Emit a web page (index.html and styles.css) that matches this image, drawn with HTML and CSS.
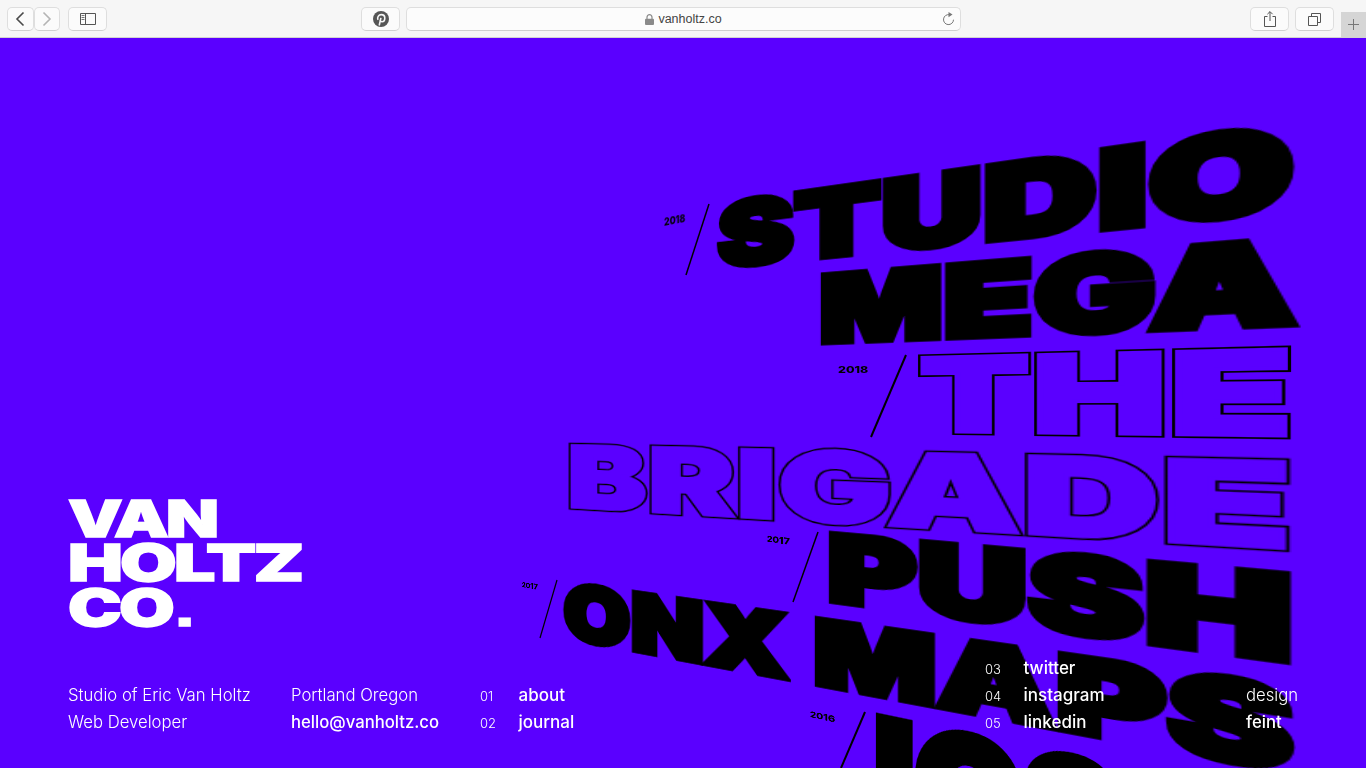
FILE: index.html
```html
<!DOCTYPE html>
<html lang="en">
<head>
  <meta charset="UTF-8" />
  <title>Van Holtz Co.</title>
  <link rel="stylesheet" href="styles.css">
</head>
<body>
  <header class="toolbar">
    <div class="nav-pair">
      <button class="btn btn-nav">
        <svg width="12" height="16" viewBox="0 0 12 16"><path d="M9.500 1.500 3 8l6.500 6.500" fill="none" stroke="#4a4a4a" stroke-width="1.600"/></svg>
      </button>
      <button class="btn btn-nav">
        <svg width="12" height="16" viewBox="0 0 12 16"><path d="M2.500 1.500 9 8l-6.500 6.500" fill="none" stroke="#b4b4b4" stroke-width="1.600"/></svg>
      </button>
    </div>
    <button class="btn btn-wide btn-sidebar">
      <svg width="16" height="12" viewBox="0 0 16 12"><path d="M.5.5h15v11H.5zM5.500.5v11" fill="none" stroke="#555"/><path d="M1.500 2.500h3M1.500 4.500h3M1.500 6.500h3" stroke="#777"/></svg>
    </button>
    <button class="btn btn-wide btn-pin">
      <svg width="16" height="16" viewBox="0 0 16 16"><circle cx="8" cy="8" r="8" fill="#555"/><path d="M6.200 14.500 7.900 6.900M5 8.800C3.900 6.600 5.500 3.600 8.300 3.600c2.400 0 3.500 1.600 3.500 3.400 0 2-1.200 3.700-2.800 3.700-1 0-1.700-.7-1.600-1.500" fill="none" stroke="#f6f6f6" stroke-width="1.600"/></svg>
    </button>
    <div class="address">
      <svg class="lock" width="9" height="11" viewBox="0 0 9 11"><path d="M2 5V3.200a2.500 2.500 0 0 1 5 0V5" fill="none" stroke="#8a8a8a" stroke-width="1.200"/><rect y="4.700" width="9" height="6.300" rx="1" fill="#8a8a8a"/></svg>
      <span>vanholtz.co</span>
      <svg class="reload" width="13" height="14" viewBox="0 0 13 14"><path d="M7.500 2.700A5 5 0 1 0 11.500 7.700" fill="none" stroke="#777" stroke-width="1"/><path d="M6.500 0v5.200L10.500 2.600z" fill="#777"/></svg>
    </div>
    <button class="btn btn-wide btn-share">
      <svg width="12" height="16" viewBox="0 0 12 16"><path d="M3.500 5.500H.5v10h11v-10h-3M6 10V.8M3.400 3.200 6 .6l2.600 2.600" fill="none" stroke="#555"/></svg>
    </button>
    <button class="btn btn-wide">
      <svg width="13" height="13" viewBox="0 0 13 13"><path d="M.5 3.500h9v9h-9zM3.500 3.500v-3h9v9h-3" fill="none" stroke="#555"/></svg>
    </button>
    <div class="new-tab">
      <svg width="11" height="11" viewBox="0 0 11 11"><path d="M5.500 0v11M0 5.500h11" stroke="#777"/></svg>
    </div>
  </header>

  <main class="page">
    <div class="board" id="board">
      <svg class="slashes" width="1366" height="730" viewBox="0 38 1366 730">
        <line x1="709" y1="204" x2="686" y2="275" stroke-width="1.500"/>
        <line x1="906" y1="355" x2="871" y2="437" stroke-width="2"/>
        <line x1="818" y1="532" x2="793" y2="602" stroke-width="1.500"/>
        <line x1="557" y1="580" x2="540" y2="638" stroke-width="1.200"/>
        <line x1="865" y1="712" x2="841" y2="768" stroke-width="2"/>
      </svg>
    </div>

    <div class="logo">
      <span class="logo-van">VAN</span>
      <span class="logo-holtz">HOLTZ</span>
      <span class="logo-co">CO<b class="logo-dot">.</b></span>
    </div>

    <footer class="info">
      <div class="col">
        <div class="row">Studio of Eric Van Holtz</div>
        <div class="row">Web Developer</div>
      </div>
      <div class="col">
        <div class="row">Portland Oregon</div>
        <div class="row"><a href="#">hello@vanholtz.co</a></div>
      </div>
      <div class="col">
        <div class="row"><span class="num">01</span><a href="#">about</a></div>
        <div class="row"><span class="num">02</span><a href="#">journal</a></div>
      </div>
      <div class="col">
        <div class="row"><span class="num">03</span><a href="#">twitter</a></div>
        <div class="row"><span class="num">04</span><a href="#">instagram</a></div>
        <div class="row"><span class="num">05</span><a href="#">linkedin</a></div>
      </div>
      <div class="col">
        <div class="row">design</div>
        <div class="row"><a href="#">feint</a></div>
      </div>
    </footer>
  </main>

  <script src="warp.js"></script>
</body>
</html>
```

FILE: styles.css
```css
* {
  box-sizing: border-box;
}

html, body {
  height: 100%;
}

body {
  margin: 0;
  overflow: hidden;
  font-family: Inter, "Liberation Sans", sans-serif;
  background-color: #5a00ff;
  color: #fff;
}

a {
  color: inherit;
  text-decoration: none;
}

/* browser bar */
.toolbar {
  display: flex;
  align-items: flex-start;
  height: 38px;
  padding: 7px 0 0 7px;
  background-color: #f6f6f6;
  border-bottom: 1px solid #d2d2d2;
}

.btn {
  display: flex;
  align-items: center;
  justify-content: center;
  height: 24px;
  padding: 0;
  background-color: #fbfbfb;
  border: 1px solid #dedede;
  border-bottom-color: #d0d0d0;
  border-radius: 5px;
}

.nav-pair {
  display: flex;
  margin-right: 8px;
}

.btn-nav {
  width: 26.500px;
}

.btn-wide {
  width: 39px;
}

.btn-pin {
  margin-left: 254px;
}

.address {
  position: relative;
  display: flex;
  align-items: center;
  justify-content: center;
  gap: 4px;
  width: 555px;
  height: 24px;
  margin: 0 289px 0 6px;
  font-family: "Liberation Sans", sans-serif;
  font-size: 12.500px;
  color: #444;
  background-color: #fcfcfc;
  border: 1px solid #dedede;
  border-bottom-color: #cfcfcf;
  border-radius: 5px;
}

.reload {
  position: absolute;
  right: 5px;
  top: 4px;
}

.btn-share {
  margin-right: 6px;
}

.new-tab {
  display: flex;
  align-items: center;
  justify-content: center;
  width: 25px;
  height: 25px;
  margin: 5px 0 0 7px;
  background-color: #d5d5d5;
}

/* main area */
.page {
  position: relative;
  display: flex;
  flex-direction: column;
  justify-content: flex-end;
  height: 730px;
  padding: 0 0 32px 68px;
  overflow: hidden;
}

.board {
  position: absolute;
  top: 0;
  left: 0;
  width: 1366px;
  height: 730px;
  overflow: hidden;
}

.slashes {
  position: absolute;
  top: 0;
  left: 0;
  stroke: #000;
}

.word {
  position: absolute;
  top: 0;
  left: 0;
  font-size: 100px;
  line-height: 100px;
  font-weight: 900;
  letter-spacing: 1px;
  white-space: nowrap;
  color: #000;
  transform-origin: 0 0;
  -webkit-text-stroke: 7.500px #000;
}

.word-outline {
  -webkit-text-stroke: 6.500px #000;
}

.word-outline::after {
  content: attr(data-text);
  position: absolute;
  top: 0;
  left: 0;
  color: #5a00ff;
  -webkit-text-stroke: 3.400px #5a00ff;
}

.year {
  position: absolute;
  top: 0;
  left: 0;
  font-size: 20px;
  line-height: 20px;
  font-weight: 800;
  white-space: nowrap;
  color: #000;
  transform-origin: 0 0;
}

.logo {
  position: relative;
  display: flex;
  flex-direction: column;
  align-items: flex-start;
  margin-bottom: 25px;
  font-size: 51px;
  line-height: 44.500px;
  font-weight: 900;
  letter-spacing: -2px;
  -webkit-text-stroke: 1.500px #fff;
}

.logo span {
  transform-origin: 0 50%;
}

.logo-van {
  transform: scaleX(1.35);
}

.logo-holtz {
  transform: scaleX(1.435);
}

.logo-co {
  transform: scaleX(1.41);
}

.logo-dot {
  font-family: "Liberation Sans", sans-serif;
  font-weight: 700;
  line-height: 0;
  margin-left: 2px;
}

.info {
  position: relative;
  display: grid;
  grid-template-columns: 223px 189px 505px 261px auto;
  align-items: end;
  font-size: 16.700px;
  line-height: 27px;
  font-weight: 300;
}

.row {
  display: flex;
  align-items: baseline;
}

.num {
  width: 38.500px;
  font-size: 13px;
  line-height: 1;
}

.info a {
  font-weight: 550;
}

.num + a {
  font-size: 17px;
}
```

FILE: warp.js
```js
// words on the board: text, corners TL TR BR BL in screen px (cap line to baseline)
const WORDS = [
  { t: 'STUDIO', q: [[716, 202], [1296, 120], [1296, 214], [716, 271]] },
  { t: 'MEGA', q: [[820, 273], [1299, 235], [1299, 328], [820, 346]] },
  { t: 'THE', q: [[917, 355], [1293, 346], [1293, 440], [917, 435]], outline: true },
  { t: 'BRIGADE', q: [[568, 443], [1292, 459], [1292, 553], [568, 510]], outline: true },
  { t: 'PUSH', q: [[828, 531], [1292, 572], [1292, 666], [828, 604]] },
  { t: 'ONX', q: [[563, 580], [790, 612.5], [790, 682.5], [563, 640]] },
  { t: 'MAPS', q: [[814, 616], [1295, 685], [1295, 777], [814, 687]] },
  { t: 'IOS', q: [[875, 713], [1120, 764], [1120, 880], [875, 825]] },
  { t: '2018', q: [[664, 218], [685, 214], [685, 222], [664, 226]], year: true },
  { t: '2018', q: [[838, 366], [868, 366], [868, 373], [838, 373]], year: true },
  { t: '2017', q: [[767, 535.5], [790, 538], [790, 545], [767, 541.5]], year: true },
  { t: '2017', q: [[522, 582], [538, 584], [538, 590], [522, 587]], year: true },
  { t: '2016', q: [[810, 711], [835, 716], [835, 722.5], [810, 717]], year: true }
];

const TOP = 38; // browser bar
const board = document.getElementById('board');
const ctx = document.createElement('canvas').getContext('2d');

function inkBox(el, text) {
  const cs = getComputedStyle(el);
  ctx.font = cs.fontWeight + ' ' + cs.fontSize + ' ' + cs.fontFamily;
  ctx.letterSpacing = cs.letterSpacing === 'normal' ? '0px' : cs.letterSpacing;
  const m = ctx.measureText(text);
  const cap = ctx.measureText('H');
  const lh = parseFloat(cs.lineHeight);
  const asc = m.fontBoundingBoxAscent;
  const base = (lh - asc - m.fontBoundingBoxDescent) / 2 + asc;
  const sw = parseFloat(cs.webkitTextStrokeWidth) || 0;
  return {
    x: -m.actualBoundingBoxLeft - sw / 2,
    y: base - cap.actualBoundingBoxAscent - sw / 2,
    w: m.actualBoundingBoxLeft + m.actualBoundingBoxRight + sw,
    h: cap.actualBoundingBoxAscent + sw
  };
}

// projective map from the ink box to the four corners
function warp(box, q) {
  const [p0, p1, p2, p3] = q.map(p => [p[0], p[1] - TOP]);
  const dx1 = p1[0] - p2[0], dx2 = p3[0] - p2[0], sx = p0[0] - p1[0] + p2[0] - p3[0];
  const dy1 = p1[1] - p2[1], dy2 = p3[1] - p2[1], sy = p0[1] - p1[1] + p2[1] - p3[1];
  const den = dx1 * dy2 - dx2 * dy1;
  const g = (sx * dy2 - dx2 * sy) / den;
  const h = (dx1 * sy - sx * dy1) / den;
  const a = p1[0] - p0[0] + g * p1[0], b = p3[0] - p0[0] + h * p3[0];
  const d = p1[1] - p0[1] + g * p1[1], e = p3[1] - p0[1] + h * p3[1];
  const ux = 1 / box.w, uy = 1 / box.h, ox = box.x * ux, oy = box.y * uy;
  return 'matrix3d(' + [
    a * ux, d * ux, 0, g * ux,
    b * uy, e * uy, 0, h * uy,
    0, 0, 1, 0,
    p0[0] - a * ox - b * oy, p0[1] - d * ox - e * oy, 0, 1 - g * ox - h * oy
  ].join(',') + ')';
}

WORDS.forEach(word => {
  const el = document.createElement('div');
  el.className = word.year ? 'year' : 'word' + (word.outline ? ' word-outline' : '');
  el.textContent = word.t;
  el.dataset.text = word.t;
  board.appendChild(el);
  el.style.transform = warp(inkBox(el, word.t), word.q);
});
```
